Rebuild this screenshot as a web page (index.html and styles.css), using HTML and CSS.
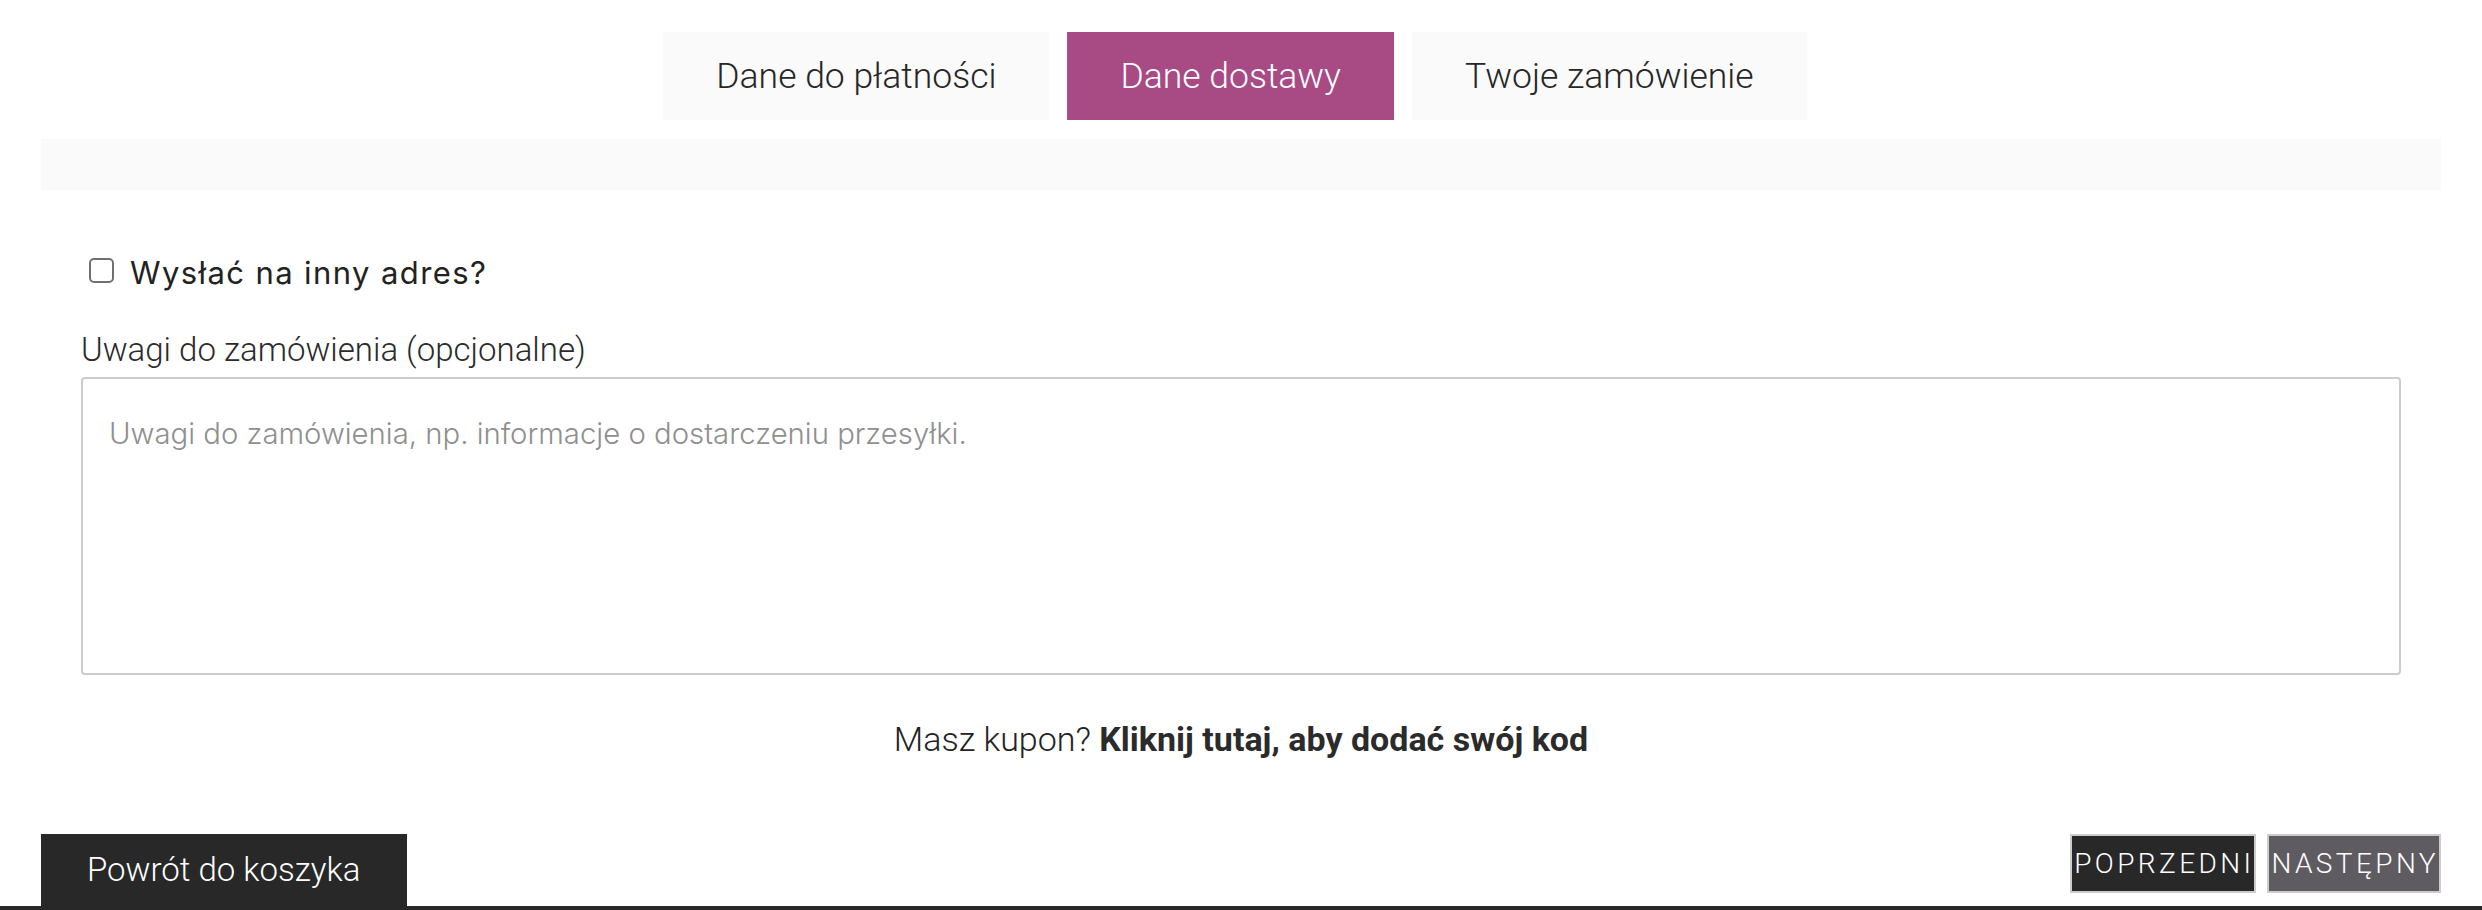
FILE: index.html
```html
<!DOCTYPE html>
<html lang="pl">
<head>
<meta charset="utf-8">
<title>Zamówienie</title>
<link rel="stylesheet" href="styles.css">
</head>
<body>
<div class="page">
  <nav class="steps">
    <a class="step">Dane do płatności</a>
    <a class="step step-active">Dane dostawy</a>
    <a class="step">Twoje zamówienie</a>
  </nav>
  <div class="step-bar"></div>

  <div class="form">
    <label class="ship">
      <input type="checkbox" class="ship-check">
      <span class="ship-text">Wysłać na inny adres?</span>
    </label>

    <label class="notes-label" for="notes">Uwagi do zamówienia (opcjonalne)</label>
    <textarea id="notes" class="notes" placeholder="Uwagi do zamówienia, np. informacje o dostarczeniu przesyłki."></textarea>

    <p class="coupon">Masz kupon? <strong>Kliknij tutaj, aby dodać swój kod</strong></p>
  </div>

  <div class="nav">
    <a class="back">Powrót do koszyka</a>
    <div class="nav-buttons">
      <button class="nav-btn nav-prev">POPRZEDNI</button>
      <button class="nav-btn nav-next">NASTĘPNY</button>
    </div>
  </div>
</div>
<footer class="footer"></footer>
</body>
</html>
```

FILE: styles.css
```css
html, body {
  margin: 0;
  padding: 0;
  background: #ffffff;
}

body {
  font-family: Roboto, "Liberation Sans", Arial, sans-serif;
  font-weight: 300;
  color: #262626;
  overflow: hidden;
}

.page {
  width: 2400px;
  margin: 0 auto;
}

.steps {
  display: flex;
  justify-content: center;
  gap: 18px;
  padding-top: 32px;
  padding-right: 12px;
}

.step {
  display: block;
  height: 88px;
  line-height: 88px;
  padding: 0 53px;
  background: #fafafa;
  font-size: 35.5px;
  color: #262626;
  white-space: nowrap;
}

.step-active {
  background: #a84a84;
  color: #ffffff;
}

.step-bar {
  margin-top: 19px;
  height: 51px;
  background: #fafafa;
}

.form {
  padding: 0 40px 0 40px;
}

.ship {
  display: flex;
  align-items: center;
  gap: 16px;
  margin-top: 68px;
  padding-left: 8px;
  height: 25px;
}

.ship-check {
  appearance: none;
  -webkit-appearance: none;
  margin: 0;
  width: 25px;
  height: 25px;
  border: 2px solid #707070;
  border-radius: 5px;
  background: #fff;
  flex: none;
}

.ship-text {
  font-family: Inter, "Noto Sans", sans-serif;
  font-weight: 400;
  font-size: 31px;
  letter-spacing: 1.4px;
  color: #222222;
  line-height: 25px;
  position: relative;
  top: 2px;
}

.notes-label {
  display: block;
  margin-top: 47px;
  font-size: 33px;
  line-height: 40px;
  color: #2b2b2b;
}

.notes {
  display: block;
  box-sizing: border-box;
  margin-top: 7px;
  width: 100%;
  height: 298px;
  border: 2px solid #cccccc;
  border-radius: 4px;
  padding: 37px 26px;
  resize: none;
  font-family: Inter, "Noto Sans", sans-serif;
  font-weight: 300;
  font-size: 29.3px;
  color: #333;
  background: #fff;
}

.notes::placeholder {
  color: #8f8f8f;
}

.coupon {
  margin: 44px 0 0;
  text-align: center;
  font-size: 34px;
  line-height: 40px;
  color: #222222;
}

.coupon strong {
  font-weight: 700;
  color: #2b2b2b;
}

.nav {
  display: flex;
  justify-content: space-between;
  align-items: flex-start;
  margin-top: 75px;
}

.back {
  display: block;
  height: 72px;
  line-height: 72px;
  padding: 0 47px 0 46px;
  background: #282828;
  color: #ffffff;
  font-size: 33px;
  font-weight: 300;
}

.nav-buttons {
  display: flex;
  gap: 11px;
}

.nav-btn {
  height: 59px;
  border: 2px solid #cccccc;
  padding: 0 0 0 2px;
  font-family: Roboto, "Liberation Sans", Arial, sans-serif;
  font-weight: 300;
  font-size: 28px;
  letter-spacing: 3.4px;
  color: #ffffff;
}

.nav-prev {
  background: #282828;
}

.nav-next {
  background: #5f5c61;
}

.footer {
  height: 40px;
  background: #282828;
}
```
